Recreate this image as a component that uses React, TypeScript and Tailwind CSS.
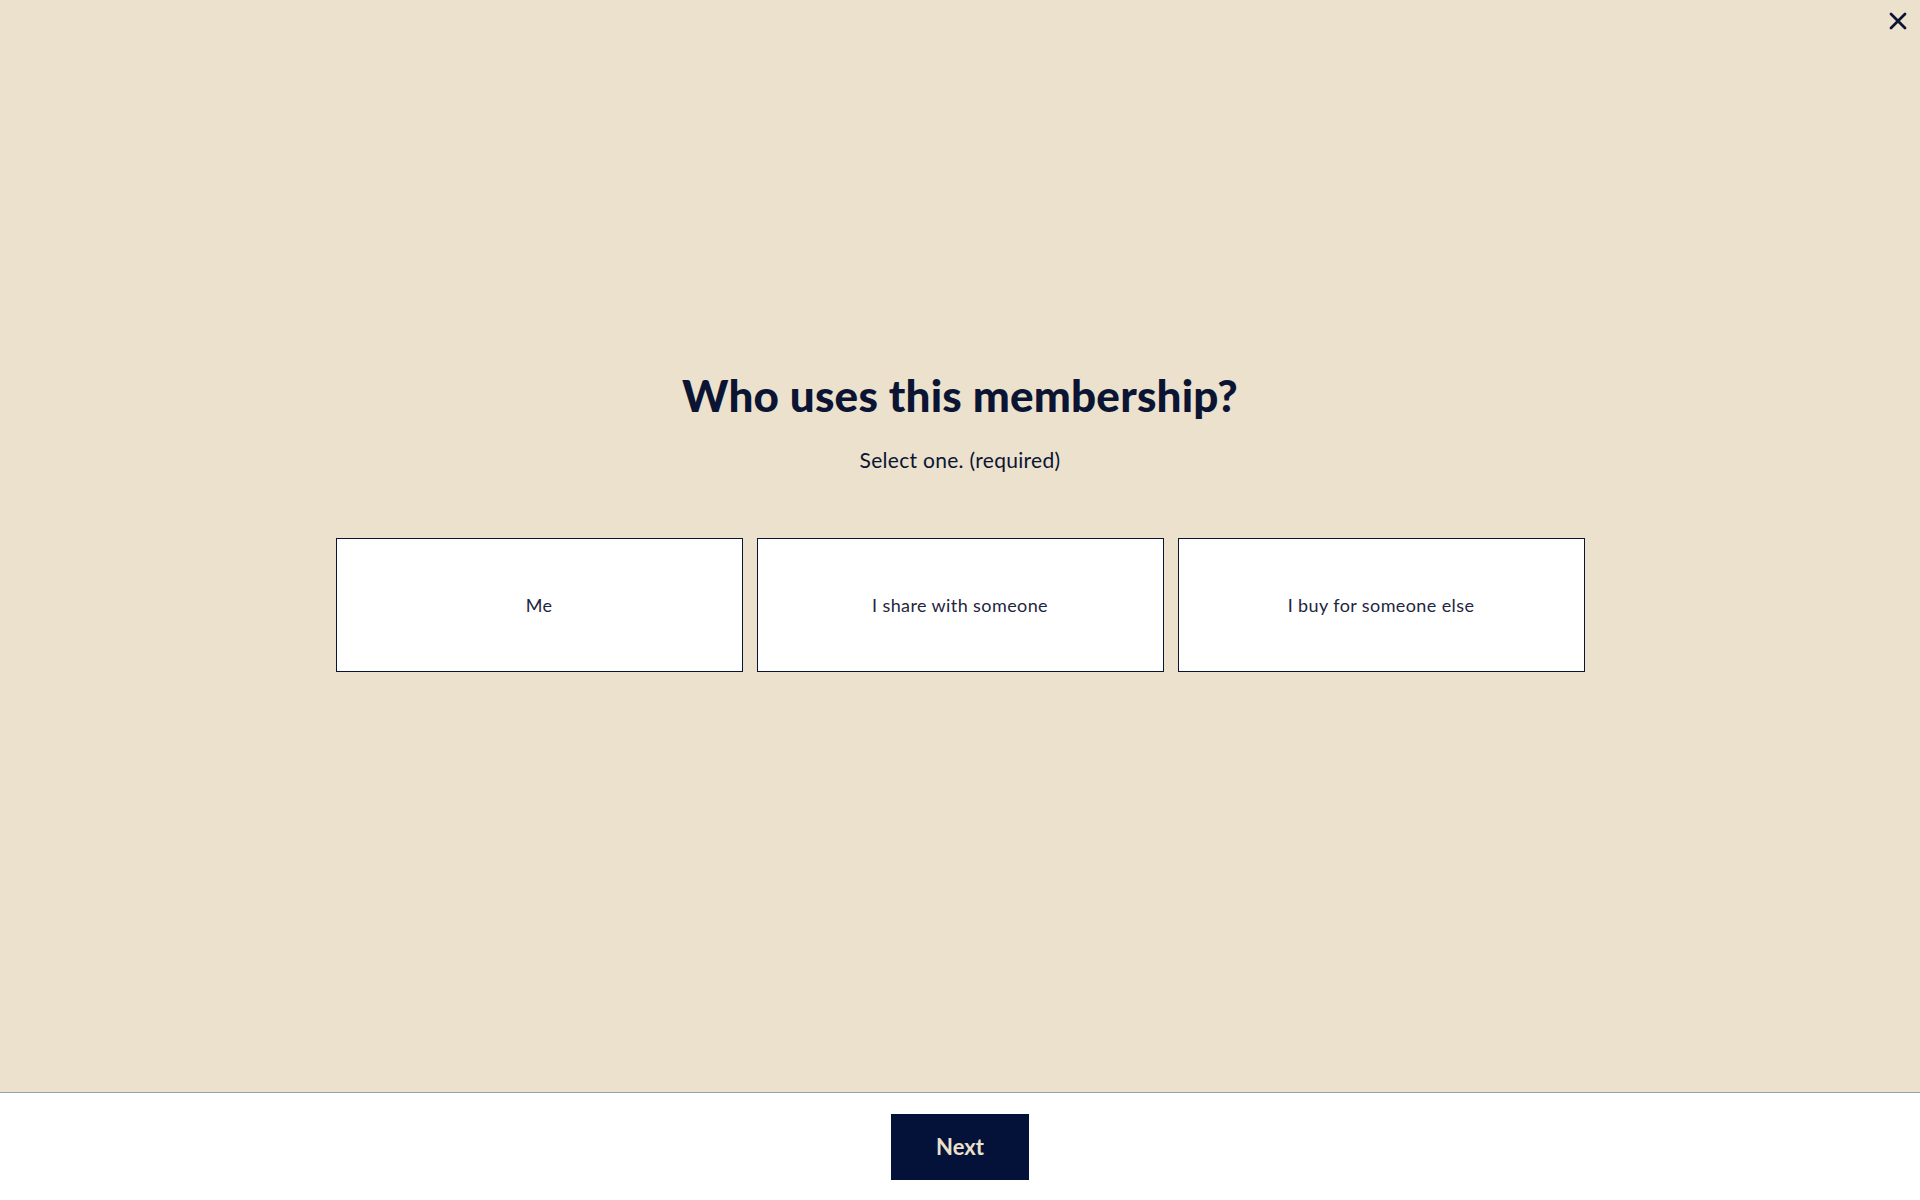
import React from "react";

export default function App() {
  const options = ["Me", "I share with someone", "I buy for someone else"];
  return (
    <div
      className="w-[1920px] h-[1200px] flex flex-col bg-[#ebe1cd] text-[#0b1533]"
      style={{ fontFamily: "Lato, 'Noto Sans', sans-serif" }}
    >
      <div className="relative flex-1 flex flex-col items-center pt-[366px]">
        <button className="absolute right-[13px] top-[12px] w-[18px] h-[18px] flex items-center justify-center text-[#0b1533]">
          <svg width="18" height="18" viewBox="0 0 18 18" fill="none">
            <path d="M2 2 L16 16 M16 2 L2 16" stroke="currentColor" strokeWidth="2.8" strokeLinecap="round" />
          </svg>
        </button>
        <h1 className="text-[44px] leading-[58px] font-black tracking-[0.2px]">Who uses this membership?</h1>
        <p className="mt-[22px] text-[21px] leading-[28px] tracking-[0.3px]">Select one. (required)</p>
        <div className="mt-[64px] flex gap-[14px]">
          {options.map((o) => (
            <button
              key={o}
              className="w-[407px] h-[134px] bg-white border-[1.5px] border-[#0b1533] flex items-center justify-center text-[18px] tracking-[0.4px] text-[#1e2540]"
            >
              {o}
            </button>
          ))}
        </div>
      </div>
      <div className="h-[108px] bg-white border-t border-[#9aa0ae] flex items-center justify-center">
        <button className="w-[138px] h-[66px] bg-[#04123a] text-[#eae0cc] text-[22px] font-bold">Next</button>
      </div>
    </div>
  );
}
